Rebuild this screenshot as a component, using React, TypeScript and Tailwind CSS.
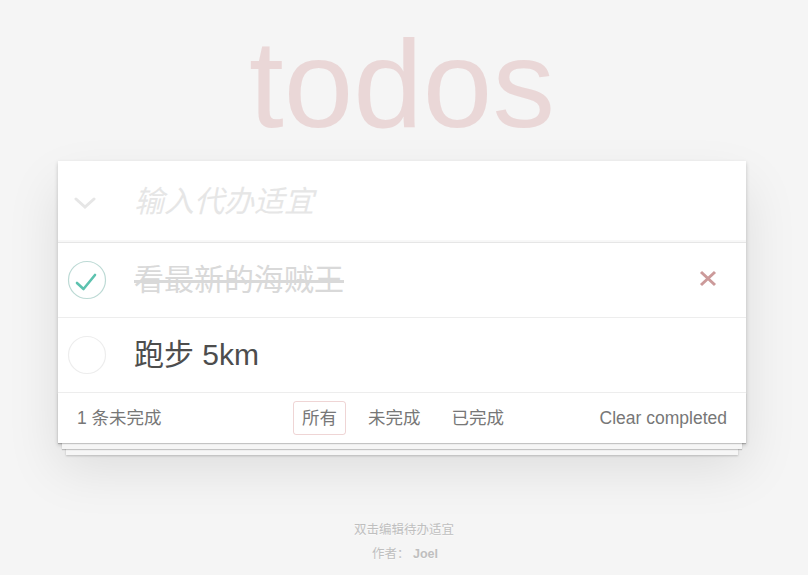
import React from 'react';

const font = { fontFamily: '"Liberation Sans", "Noto Sans CJK SC", Arial, sans-serif' };

const CheckCircle: React.FC<{ done: boolean }> = ({ done }) => (
  <svg width="40" height="40" viewBox="0 0 40 40" className="shrink-0">
    <circle cx="20" cy="20" r="18.5" fill="none" stroke={done ? '#bddad5' : '#ededed'} strokeWidth="1.2" />
    {done && (
      <path d="M10 23 L16.5 29 L28 15" fill="none" stroke="#5dc2af" strokeWidth="2.6" strokeLinecap="round" strokeLinejoin="round" />
    )}
  </svg>
);

export default function App() {
  const todos = [
    { text: '看最新的海贼王', done: true },
    { text: '跑步 5km', done: false },
  ];

  return (
    <div className="min-h-[575px] w-[808px] bg-[#f5f5f5] overflow-hidden" style={font}>
      <h1 className="pt-[21px] h-[146px] text-center text-[125px] leading-none font-normal text-[#ead7d7] pr-[4px]">todos</h1>

      <section className="ml-[58px] mt-[15px] w-[688px] bg-white shadow-[0_2px_4px_0_rgba(0,0,0,0.2),0_25px_50px_0_rgba(0,0,0,0.1)]">
        {/* header input */}
        <div className="flex h-[82px] items-center border-b border-[#e6e6e6] shadow-[inset_0_-2px_1px_rgba(0,0,0,0.03)]">
          <div className="flex pl-[16px] pt-[2px]">
            <svg width="22" height="12" viewBox="0 0 22 12">
              <path d="M2 2 L11 10 L20 2" fill="none" stroke="#e6e6e6" strokeWidth="3" strokeLinecap="round" />
            </svg>
          </div>
          <span className="ml-[38px] text-[30px] italic text-[#e6e6e6]">输入代办适宜</span>
        </div>

        {/* list */}
        {todos.map((t, i) => (
          <div key={i} className="flex h-[75px] items-center border-b border-[#ededed]">
            <div className="flex pl-[9px]">
              <CheckCircle done={t.done} />
            </div>
            <span
              className={`ml-[27px] flex-1 text-[30px] leading-none ${t.done ? 'text-[#d9d9d9] line-through decoration-[#d9d9d9] decoration-[3px]' : 'text-[#4d4d4d]'}`}
            >
              {t.text}
            </span>
            {t.done && (
              <svg width="18" height="17" viewBox="0 0 18 17" className="mr-[29px] mb-[3px]">
                <path d="M2 2 L16 15 M16 2 L2 15" stroke="#cc9a9a" strokeWidth="3" />
              </svg>
            )}
          </div>
        ))}

        {/* footer */}
        <footer className="relative flex h-[50px] items-center px-[19px] text-[17.5px] text-[#777] shadow-[0_1px_1px_rgba(0,0,0,0.2),0_10px_0_-4px_#f6f6f6,0_11px_1px_-4px_rgba(0,0,0,0.2),0_20px_0_-8px_#f6f6f6,0_21px_2px_-8px_rgba(0,0,0,0.2)]">
          <span className="w-[216px]">1 条未完成</span>
          <div className="flex items-center gap-[13px]">
            <span className="rounded-[3px] border border-[rgba(175,47,47,0.2)] px-[8px] py-[3px]">所有</span>
            <span className="border border-transparent px-[8px] py-[3px]">未完成</span>
            <span className="border border-transparent px-[8px] py-[3px]">已完成</span>
          </div>
          <span className="ml-auto">Clear completed</span>
        </footer>
      </section>

      <footer className="mt-[81px] text-center text-[12.5px] leading-none text-[#bfbfbf] [text-shadow:0_1px_0_rgba(255,255,255,0.5)]">
        <p>双击编辑待办适宜</p>
        <p className="mt-[11px] pl-[2px]">
          作者：&nbsp;<span className="font-bold text-[#bfbfbf]">Joel</span>
        </p>
      </footer>
    </div>
  );
}
